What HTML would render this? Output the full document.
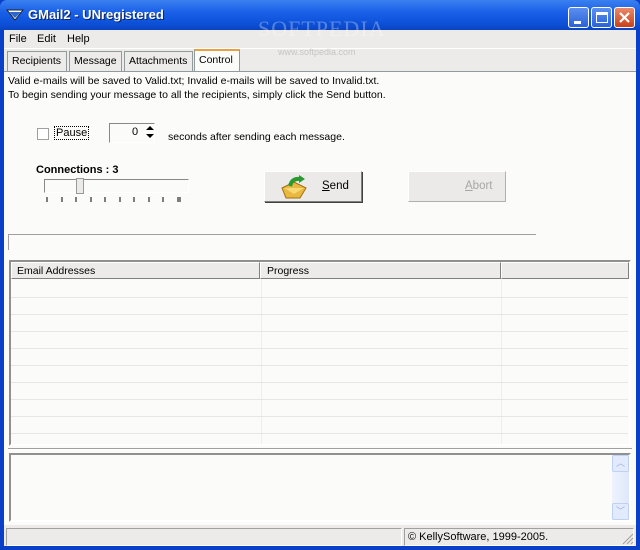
<!DOCTYPE html>
<html><head><meta charset="utf-8"><style>
*{margin:0;padding:0;box-sizing:border-box}
body{width:640px;height:550px;overflow:hidden;font-family:"Liberation Sans",sans-serif;font-size:10.5px;color:#000;background:#0a3fc8;position:relative}
.a{position:absolute}
.title{left:0;top:0;width:640px;height:30px;background:linear-gradient(#3a80f0,#1a60e8 40%,#0c50d8 80%,#0a44c0);border-radius:7px 7px 0 0}
.win{left:4px;top:30px;width:632px;height:516px;background:#ecebe9}
.btn{background:#eceae8;border:1px solid;border-color:#fff #808080 #808080 #fff;box-shadow:1px 1px 0 #404040}
.tab{top:51px;height:20px;background:#ecebe9;border:1px solid #919b9c;border-bottom:none;padding:3px 4px 0}
.row{left:11px;width:617px;height:1px;background:#e6e6e6}
</style></head><body>
<div class="a title"></div>
<svg class="a" style="left:6px;top:8px" width="18" height="14"><polygon points="1,2 17,2 9,12" fill="#fff" stroke="#222"/><polygon points="3,4 15,4 9,10" fill="#2a6ad0"/></svg>
<div class="a" style="left:28px;top:7px;color:#fff;font-weight:bold;font-size:13px;text-shadow:1px 1px #0a246a">GMail2 - UNregistered</div>
<div class="a" style="left:568px;top:7px;width:21px;height:21px;border:1px solid #fff;border-radius:3px;background:linear-gradient(#5b8ff0,#2a62d8)"><div class="a" style="left:5px;top:13px;width:7px;height:3px;background:#fff"></div></div>
<div class="a" style="left:591px;top:7px;width:21px;height:21px;border:1px solid #fff;border-radius:3px;background:linear-gradient(#5b8ff0,#2a62d8)"><div class="a" style="left:4px;top:4px;width:12px;height:11px;border:1px solid #fff;border-top-width:3px"></div></div>
<div class="a" style="left:614px;top:7px;width:21px;height:21px;border:1px solid #fff;border-radius:3px;background:linear-gradient(#e88a6a,#c8401c)"><svg width="19" height="19"><path d="M5 5L14 14M14 5L5 14" stroke="#fff" stroke-width="2.2"/></svg></div>
<div class="a win"></div>
<div class="a" style="left:9px;top:33px;font-size:11px">File</div>
<div class="a" style="left:37px;top:33px;font-size:11px">Edit</div>
<div class="a" style="left:67px;top:33px;font-size:11px">Help</div>
<div class="a" style="left:4px;top:48px;width:632px;height:1px;background:#fff"></div>
<div class="a tab" style="left:7px;width:60px">Recipients</div>
<div class="a tab" style="left:69px;width:53px">Message</div>
<div class="a tab" style="left:124px;width:69px">Attachments</div>
<div class="a tab" style="left:194px;top:49px;height:23px;width:46px;background:#fbfcfa;border-top:2px solid #e8a040;padding-top:3px">Control</div>
<div class="a" style="left:4px;top:71px;width:632px;height:454px;background:#fbfcfa;border-top:1px solid #919b9c"></div>
<div class="a" style="left:258px;top:16px;color:rgba(255,255,255,.3);font-family:'Liberation Serif',serif;font-size:22px;letter-spacing:1px;z-index:5">SOFTPEDIA</div>
<div class="a" style="left:278px;top:47px;color:rgba(160,160,160,.5);font-size:9px;z-index:5">www.softpedia.com</div>
<div class="a" style="left:8px;top:74px;line-height:14px">Valid e-mails will be saved to Valid.txt; Invalid e-mails will be saved to Invalid.txt.<br>To begin sending your message to all the recipients, simply click the Send button.</div>
<div class="a" style="left:37px;top:128px;width:12px;height:12px;border:1px solid #a0a0a0;background:#fff"></div>
<div class="a" style="left:54px;top:126px;border:1px dotted #000;padding:0 1px;font-size:11px">Pause</div>
<div class="a" style="left:109px;top:123px;width:46px;height:20px;border:1px solid;border-color:#888 #fff #fff #888;background:#fbfcfa;padding:2px 0 0 22px;font-size:11px">0</div>
<svg class="a" style="left:145px;top:124px" width="10" height="16"><path d="M1 6L5 2L9 6ZM1 10L9 10L5 14Z" fill="#000"/></svg>
<div class="a" style="left:168px;top:131px">seconds after sending each message.</div>
<div class="a" style="left:36px;top:164px;font-weight:bold;font-size:11px">Connections : 3</div>
<div class="a" style="left:44px;top:179px;width:145px;height:14px;border:1px solid;border-color:#888 #fff #fff #888;background:#fbfcfa"></div>
<div class="a" style="left:76px;top:178px;width:8px;height:16px;background:#eceae8;border:1px solid #999"></div>
<svg class="a" style="left:44px;top:197px" width="145" height="8"><path d="M3 0v5M18 0v5M32 0v5M47 0v5M61 0v5M76 0v5M90 0v5M105 0v5M119 0v5M134 0v5M136 0v5" stroke="#000"/></svg>
<div class="a btn" style="left:264px;top:171px;width:98px;height:31px"></div>
<svg class="a" style="left:280px;top:174px" width="28" height="26"><polygon points="2,14 14,8 26,14 20,24 6,24" fill="#e8b840" stroke="#a07010"/><polygon points="4,14 14,20 24,14" fill="#f8d870"/><path d="M10 12Q12 4 20 5" stroke="#2a9a30" stroke-width="4" fill="none"/><polygon points="19,1 25,5 19,9" fill="#2a9a30"/></svg>
<div class="a" style="left:322px;top:180px;font-size:11.5px"><u>S</u>end</div>
<div class="a btn" style="left:408px;top:171px;width:98px;height:31px;box-shadow:none;border-color:#fff #b0b0b0 #b0b0b0 #fff"></div>
<div class="a" style="left:465px;top:180px;font-size:11.5px;color:#a6a6a6"><u>A</u>bort</div>
<div class="a" style="left:8px;top:234px;width:528px;height:16px;border-top:1px solid #a0a0a0;border-left:1px solid #a0a0a0"></div>
<div class="a" style="left:9px;top:260px;width:622px;height:186px;border:2px solid;border-color:#909090 #fff #fff #909090;background:#fbfcfa"></div>
<div class="a" style="left:11px;top:262px;width:249px;height:17px;background:#ecebe9;border:1px solid;border-color:#fff #808080 #808080 #fff;padding:2px 0 0 5px">Email Addresses</div>
<div class="a" style="left:260px;top:262px;width:241px;height:17px;background:#ecebe9;border:1px solid;border-color:#fff #808080 #808080 #fff;padding:2px 0 0 6px">Progress</div>
<div class="a" style="left:501px;top:262px;width:128px;height:17px;background:#ecebe9;border:1px solid;border-color:#fff #808080 #808080 #fff"></div>
<div class="a" style="left:261px;top:279px;width:1px;height:165px;background:#eee"></div>
<div class="a" style="left:501px;top:279px;width:1px;height:165px;background:#eee"></div>
<div class="a row" style="top:297px"></div><div class="a row" style="top:314px"></div><div class="a row" style="top:331px"></div><div class="a row" style="top:348px"></div><div class="a row" style="top:365px"></div><div class="a row" style="top:382px"></div><div class="a row" style="top:399px"></div><div class="a row" style="top:416px"></div><div class="a row" style="top:433px"></div>
<div class="a" style="left:8px;top:448px;width:624px;height:2px;border-top:1px solid #a0a0a0;border-bottom:1px solid #fff"></div>
<div class="a" style="left:9px;top:453px;width:622px;height:69px;border:2px solid;border-color:#909090 #fff #fff #909090;background:#fbfcfa"></div>
<div class="a" style="left:612px;top:455px;width:17px;height:65px;background:linear-gradient(90deg,#eef3fd,#dde8fb)"></div>
<div class="a" style="left:612px;top:455px;width:17px;height:17px;border:1px solid #c0d0f0;border-radius:2px;background:#e2ebfd;text-align:center;color:#9bb0d8;font-size:9px;line-height:15px">︿</div>
<div class="a" style="left:612px;top:503px;width:17px;height:17px;border:1px solid #c0d0f0;border-radius:2px;background:#e2ebfd;text-align:center;color:#9bb0d8;font-size:9px;line-height:15px">﹀</div>
<div class="a" style="left:4px;top:525px;width:632px;height:21px;background:#ecebe9"></div>
<div class="a" style="left:6px;top:528px;width:396px;height:18px;border:1px solid;border-color:#a0a0a0 #fff #fff #a0a0a0"></div>
<div class="a" style="left:404px;top:528px;width:230px;height:18px;border:1px solid;border-color:#a0a0a0 #fff #fff #a0a0a0;padding:2px 0 0 3px;font-size:11px">© KellySoftware, 1999-2005.</div>
<svg class="a" style="left:622px;top:533px" width="12" height="12"><path d="M11 1L1 11M11 5L5 11M11 9L9 11" stroke="#a0a0a0"/></svg>
</body></html>
